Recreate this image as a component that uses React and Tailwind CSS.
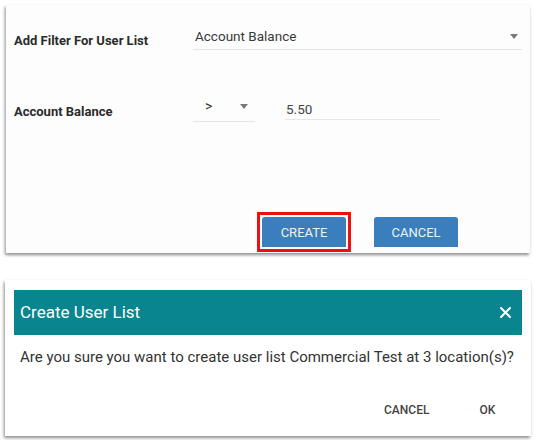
import React from 'react'

function Caret({ className }) {
  return (
    <svg width="8" height="5" viewBox="0 0 8 5" className={className}>
      <path d="M0 0 L8 0 L4 5 Z" fill="#7a7a7a" />
    </svg>
  )
}

function App() {
  return (
    <div className="w-[537px] h-[440px] bg-white font-['Roboto',sans-serif] text-[#333] overflow-hidden">
      {/* filter panel */}
      <section className="ml-[6px] mt-[5px] w-[524px] h-[248px] bg-[#fdfdfd] flex flex-col shadow-[-1px_2px_3px_rgba(0,0,0,0.45)]">
        <div className="flex mt-[20px]">
          <label className="w-[187px] pl-[8px] pt-[7px] leading-[17px] text-[13px] font-bold text-[#2b2b2b]">
            Add Filter For User List
          </label>
          <div className="w-[329px] h-[25px] pt-[3px] pl-[2px] pr-[4px] border-b border-[#e6e6e6] flex items-start justify-between">
            <span className="text-[13.5px] leading-[17px] text-[#3a3a3a]">Account Balance</span>
            <Caret className="mt-[6px]" />
          </div>
        </div>

        <div className="flex mt-[45px]">
          <label className="w-[187px] pl-[8px] pt-[8px] leading-[17px] text-[13px] font-bold text-[#2b2b2b]">
            Account Balance
          </label>
          <div className="w-[62px] h-[27px] pt-[3px] pl-[12px] pr-[7px] border-b border-[#e6e6e6] flex items-start justify-between">
            <span className="text-[14px] leading-[17px] text-[#333]">&gt;</span>
            <Caret className="mt-[6px]" />
          </div>
          <div className="ml-[30px] w-[155px] h-[25px] pt-[2px] pl-[1px] border-b border-[#e6e6e6]">
            <span className="text-[13.5px] leading-[17px] text-[#444]">5.50</span>
          </div>
        </div>

        <div className="mt-auto mb-[1px] flex items-start pl-[251px]">
          <div className="border-[3px] border-[#ee1010] p-[2px]">
            <button className="w-[84px] h-[30px] bg-[#3a7ebd] rounded-t-[3px] text-[#eef3f9] text-[13px] leading-[31px]">
              CREATE
            </button>
          </div>
          <button className="ml-[23px] mt-[5px] w-[84px] h-[30px] bg-[#3a7ebd] rounded-t-[3px] text-[#eef3f9] text-[13px] leading-[31px]">
            CANCEL
          </button>
        </div>
      </section>

      {/* confirm dialog */}
      <section className="ml-[5px] mt-[27px] w-[526px] h-[156px] bg-white px-[9px] pt-[10px] shadow-[-1px_2px_3px_rgba(0,0,0,0.45)]">
        <div className="h-[45px] bg-[#08858f] flex items-center justify-between pl-[6px] pr-[11px]">
          <h2 className="text-[17px] text-white leading-none">Create User List</h2>
          <svg width="11" height="11" viewBox="0 0 11 11">
            <path d="M1 1 L10 10 M10 1 L1 10" stroke="white" strokeWidth="2" strokeLinecap="round" />
          </svg>
        </div>
        <p className="mt-[13px] pl-[6px] text-[15px] leading-[18px] text-[#333] whitespace-nowrap">
          Are you sure you want to create user list Commercial Test at 3 location(s)?
        </p>
        <div className="mt-[35px] flex text-[12px] font-medium text-[#444]">
          <span className="ml-[370px]">CANCEL</span>
          <span className="ml-[50px]">OK</span>
        </div>
      </section>
    </div>
  )
}

export default App
